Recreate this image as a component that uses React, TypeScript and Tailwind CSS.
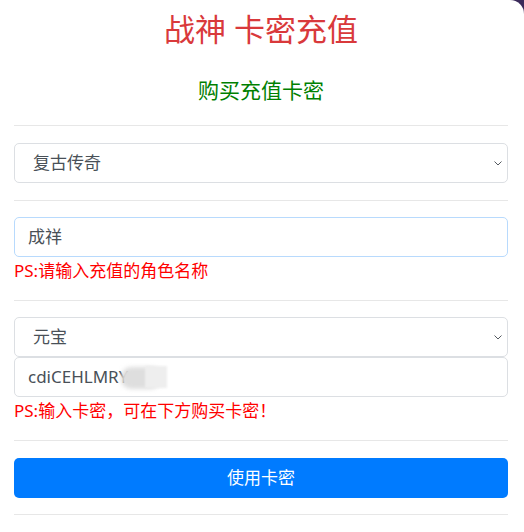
import React from 'react';

const font = { fontFamily: '"Noto Sans", "Noto Sans CJK SC", sans-serif' };

function Chevron() {
  return (
    <svg className="pointer-events-none absolute right-[4px] top-1/2 -translate-y-1/2" width="10" height="8" viewBox="0 0 10 8">
      <path d="M1.5 2.5l3.5 3.5 3.5-3.5" fill="none" stroke="#555a60" strokeWidth="1" />
    </svg>
  );
}

function Rule({ className = '' }: { className?: string }) {
  return <div className={`h-px w-full bg-[#e7e7e7] ${className}`} />;
}

export default function App() {
  return (
    <div className="h-[532px] w-[524px] overflow-hidden bg-[#3b2a5a]" style={font}>
      <div className="flex h-full flex-col rounded-tr-[14px] bg-white px-[14px] pr-[16px]">
        <h2 className="mt-[10px] text-center text-[31px] leading-[38px] text-[#d9393b]">战神 卡密充值</h2>
        <h5 className="mt-[29px] text-center text-[21px] leading-[26px] text-[#008000]">购买充值卡密</h5>

        <Rule className="mt-[22px]" />

        <div className="relative mt-[17px] flex h-[40px] items-center rounded-[5px] border border-[#dcdfe3] pl-[18px] text-[17px] text-[#495057]">
          复古传奇
          <Chevron />
        </div>

        <Rule className="mt-[17px]" />

        <div className="mt-[16px] flex h-[40px] items-center rounded-[5px] border border-[#b8dafd] pl-[13px] text-[17px] text-[#495057]">
          成祥
        </div>
        <p className="mt-px text-[17px] leading-[26px] text-[#ff0000]">PS:请输入充值的角色名称</p>

        <Rule className="mt-[16px]" />

        <div className="relative mt-[16px] flex h-[40px] items-center rounded-[5px] border border-[#dcdfe3] pl-[18px] text-[17px] text-[#495057]">
          元宝
          <Chevron />
        </div>
        <div className="relative flex h-[40px] items-center rounded-[5px] border border-[#dcdfe3] pl-[13px] text-[17px] text-[#495057]">
          cdiCEHLMRY
          <div className="absolute left-[106px] top-[9px] h-[22px] w-[40px] rounded-[10px] bg-[#dedede] blur-[2px]" />
          <div className="absolute left-[130px] top-[8px] h-[22px] w-[22px] bg-[#eeeeee] blur-[1px]" />
        </div>
        <p className="mt-px text-[17px] leading-[26px] text-[#ff0000]">PS:输入卡密，可在下方购买卡密！</p>

        <Rule className="mt-[16px]" />

        <button className="mt-[17px] h-[40px] w-full rounded-[5px] bg-[#007bff] text-[17px] text-white">使用卡密</button>

        <Rule className="mt-[16px]" />
      </div>
    </div>
  );
}
